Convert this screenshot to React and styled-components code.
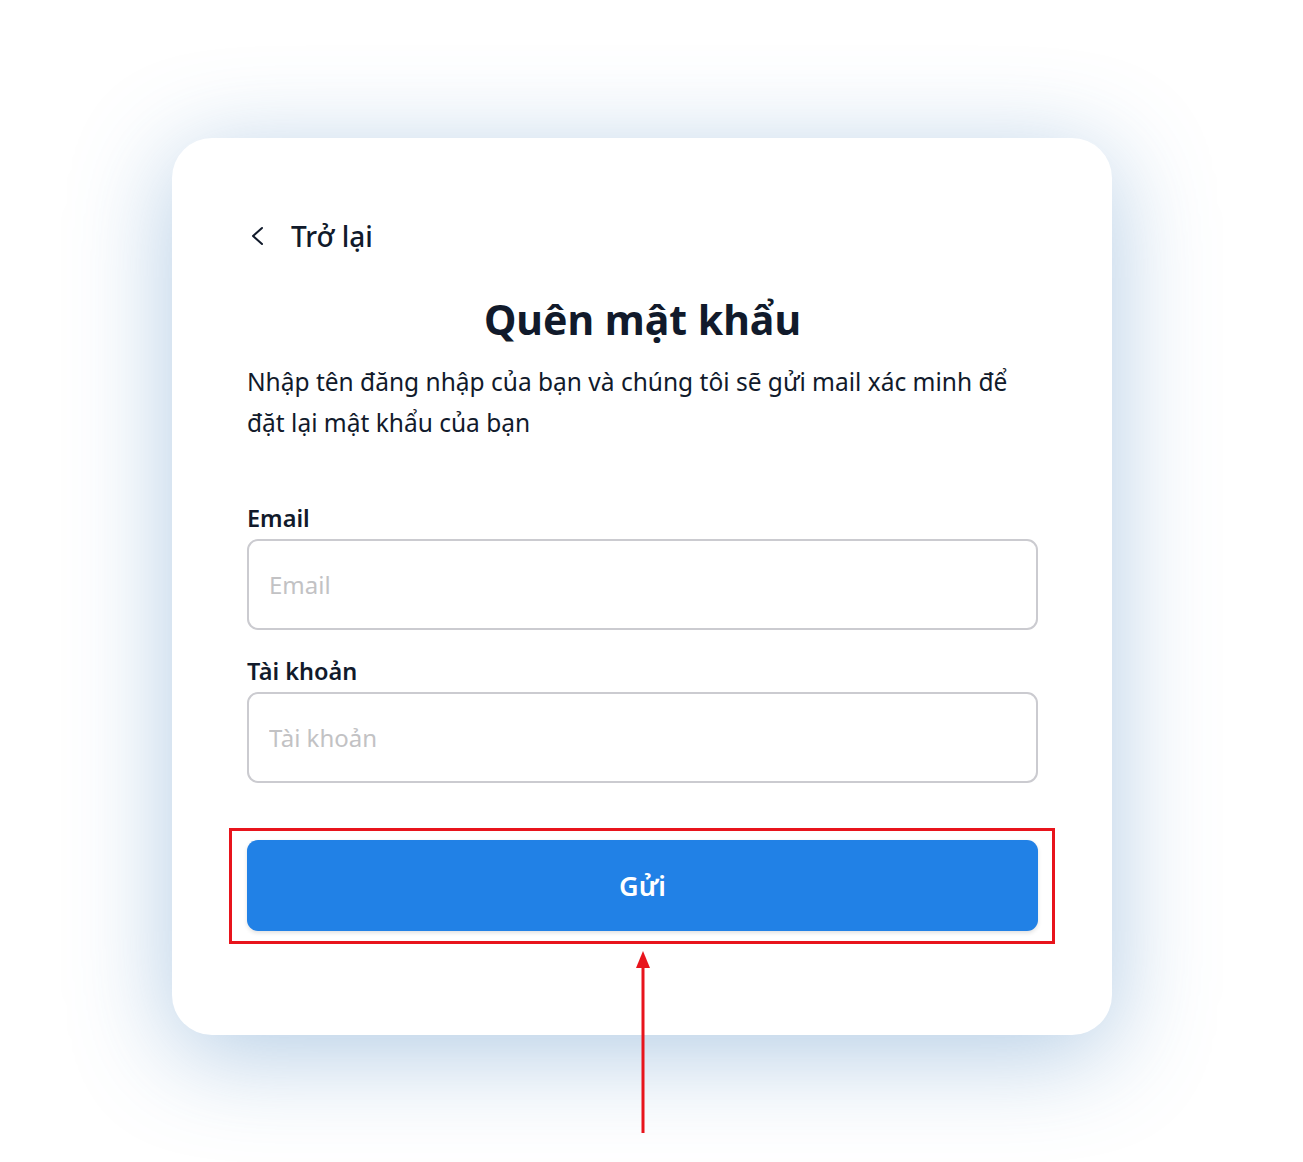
import React from 'react'
import styled, { createGlobalStyle } from 'styled-components'

const GlobalStyle = createGlobalStyle`
  html, body {
    margin: 0;
    padding: 0;
    background: #ffffff;
  }
  * {
    box-sizing: border-box;
  }
`

const Page = styled.div`
  width: 1303px;
  height: 1162px;
  padding: 138px 191px 0 172px;
  font-family: "Noto Sans", "Open Sans", sans-serif;
  color: #111a2b;
  overflow: hidden;
`

const Card = styled.div`
  width: 940px;
  height: 897px;
  padding: 80px 74px 0 75px;
  background: #ffffff;
  border-radius: 40px;
  box-shadow: 0 18px 100px rgba(70, 130, 190, 0.42);
  display: flex;
  flex-direction: column;
`

const BackLink = styled.a`
  display: flex;
  align-items: center;
  gap: 27px;
  padding-left: 3px;
  font-size: 28px;
  font-weight: 500;
  color: #111a2b;
  text-decoration: none;
  cursor: pointer;
  height: 36px;
`

const Title = styled.h1`
  margin: 41px 0 0;
  text-align: center;
  font-size: 41px;
  font-weight: 700;
  line-height: 1.2;
  color: #111a2b;
`

const Description = styled.p`
  margin: 17px 0 0;
  max-width: 775px;
  font-size: 24.5px;
  line-height: 41px;
  color: #111a2b;
`

const Form = styled.form`
  margin-top: 60px;
  display: flex;
  flex-direction: column;
`

const Field = styled.div`
  display: flex;
  flex-direction: column;
  margin-bottom: ${({ last }) => (last ? '57px' : '26px')};
`

const Label = styled.label`
  font-size: 23.5px;
  font-weight: 600;
  line-height: 30px;
  margin-bottom: 6px;
  color: #111a2b;
`

const Input = styled.input`
  height: 91px;
  width: 100%;
  padding: 0 20px;
  border: 2px solid #cbcbd0;
  border-radius: 11px;
  font-family: inherit;
  font-size: 24px;
  color: #111a2b;
  outline: none;
  &::placeholder {
    color: #c2c2c4;
  }
`

const SubmitArea = styled.div`
  position: relative;
`

const Button = styled.button`
  width: 100%;
  height: 91px;
  border: none;
  border-radius: 11px;
  background: #2181e6;
  color: #ffffff;
  font-family: inherit;
  font-size: 27px;
  font-weight: 600;
  box-shadow: 0 2px 4px rgba(0, 0, 0, 0.12);
  cursor: pointer;
`

const Highlight = styled.div`
  position: absolute;
  left: -18px;
  right: -17px;
  top: -12px;
  bottom: -13px;
  border: 3px solid #e8141c;
  pointer-events: none;
`

const Arrow = styled.svg`
  position: absolute;
  left: 50%;
  top: 111px;
  margin-left: -10px;
  overflow: visible;
`

const ChevronLeft = () => (
  <svg width="14" height="20" viewBox="0 0 14 20" fill="none">
    <path d="M12 2 L3 10 L12 18" stroke="#111a2b" strokeWidth="2" strokeLinecap="round" strokeLinejoin="round" />
  </svg>
)

export default function App() {
  return (
    <>
      <GlobalStyle />
      <Page>
        <Card>
          <BackLink>
            <ChevronLeft />
            <span>Trở lại</span>
          </BackLink>
          <Title>Quên mật khẩu</Title>
          <Description>
            Nhập tên đăng nhập của bạn và chúng tôi sẽ gửi mail xác minh để đặt lại mật khẩu của bạn
          </Description>
          <Form onSubmit={e => e.preventDefault()}>
            <Field>
              <Label>Email</Label>
              <Input placeholder="Email" />
            </Field>
            <Field last>
              <Label>Tài khoản</Label>
              <Input placeholder="Tài khoản" />
            </Field>
            <SubmitArea>
              <Button type="submit">Gửi</Button>
              <Highlight />
              <Arrow width="20" height="182" viewBox="0 0 20 182">
                <polygon points="10,0 3,17 17,17" fill="#e8141c" />
                <rect x="8.5" y="14" width="3" height="168" fill="#e8141c" />
              </Arrow>
            </SubmitArea>
          </Form>
        </Card>
      </Page>
    </>
  )
}
